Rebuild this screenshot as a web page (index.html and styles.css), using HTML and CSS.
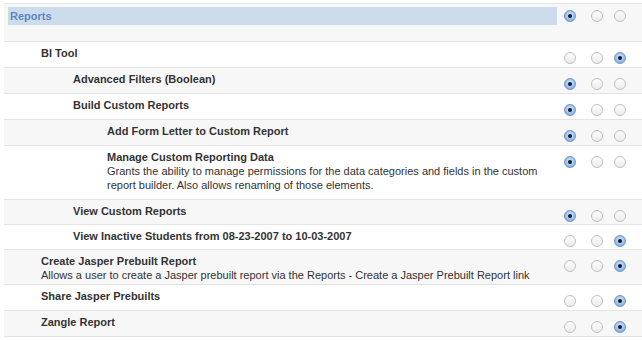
FILE: index.html
```html
<!DOCTYPE html>
<html>
<head>
<meta charset="utf-8">
<link rel="stylesheet" href="styles.css">
</head>
<body>
<div class="table">
  <div class="row row-head gray">
    <div class="label"><div class="head-bar">Reports</div></div>
    <div class="radios head-radios"><span class="radio on"></span><span class="radio"></span><span class="radio"></span></div>
  </div>
  <div class="row">
    <div class="label l1"><div class="title">BI Tool</div></div>
    <div class="radios"><span class="radio"></span><span class="radio"></span><span class="radio on"></span></div>
  </div>
  <div class="row gray">
    <div class="label l2"><div class="title">Advanced Filters (Boolean)</div></div>
    <div class="radios"><span class="radio on"></span><span class="radio"></span><span class="radio"></span></div>
  </div>
  <div class="row">
    <div class="label l2"><div class="title">Build Custom Reports</div></div>
    <div class="radios"><span class="radio on"></span><span class="radio"></span><span class="radio"></span></div>
  </div>
  <div class="row gray">
    <div class="label l3"><div class="title">Add Form Letter to Custom Report</div></div>
    <div class="radios"><span class="radio on"></span><span class="radio"></span><span class="radio"></span></div>
  </div>
  <div class="row row-tall">
    <div class="label l3"><div class="title">Manage Custom Reporting Data</div><div class="desc">Grants the ability to manage permissions for the data categories and fields in the custom report builder. Also allows renaming of those elements.</div></div>
    <div class="radios"><span class="radio on"></span><span class="radio"></span><span class="radio"></span></div>
  </div>
  <div class="row row-short gray">
    <div class="label l2"><div class="title">View Custom Reports</div></div>
    <div class="radios"><span class="radio on"></span><span class="radio"></span><span class="radio"></span></div>
  </div>
  <div class="row row-short">
    <div class="label l2"><div class="title">View Inactive Students from 08-23-2007 to 10-03-2007</div></div>
    <div class="radios"><span class="radio"></span><span class="radio"></span><span class="radio on"></span></div>
  </div>
  <div class="row gray">
    <div class="label l1"><div class="title">Create Jasper Prebuilt Report</div><div class="desc">Allows a user to create a Jasper prebuilt report via the Reports - Create a Jasper Prebuilt Report link</div></div>
    <div class="radios"><span class="radio"></span><span class="radio"></span><span class="radio on"></span></div>
  </div>
  <div class="row">
    <div class="label l1"><div class="title">Share Jasper Prebuilts</div></div>
    <div class="radios"><span class="radio"></span><span class="radio"></span><span class="radio on"></span></div>
  </div>
  <div class="row gray">
    <div class="label l1"><div class="title">Zangle Report</div></div>
    <div class="radios"><span class="radio"></span><span class="radio"></span><span class="radio on"></span></div>
  </div>
</div>
</body>
</html>
```
FILE: styles.css
```css
html, body {
  margin: 0;
  padding: 0;
  background: #ffffff;
}
body {
  font-family: "Liberation Sans", Arial, sans-serif;
  font-size: 11px;
  color: #333333;
}
.table {
  margin: 3px 0 0 4px;
  border-top: 1px solid #e6e6e6;
}
.row {
  display: flex;
  min-height: 25px;
  border-bottom: 1px solid #e4e4e4;
  background: #ffffff;
}
.row.gray {
  background: #f7f7f7;
}
.row-head {
  min-height: 37px;
}
.row-tall .label {
  padding-bottom: 7px;
}
.row-short {
  min-height: 24px;
}
.label {
  flex: 1;
  padding: 4px 0 2px 0;
  line-height: 14px;
}
.l1 { padding-left: 37px; }
.l2 { padding-left: 69px; }
.l3 { padding-left: 103px; }
.title {
  font-weight: bold;
}
.desc {
  padding-right: 20px;
}
.head-bar {
  margin: 3px 3px 0 4px;
  height: 18px;
  line-height: 18px;
  padding-left: 2px;
  background: #cddced;
  color: #5b86c1;
  font-weight: bold;
}
.label:has(.head-bar) {
  padding-top: 0;
}
.radios {
  width: 82px;
  flex: none;
  display: flex;
  align-items: flex-start;
  padding-top: 10px;
  box-sizing: border-box;
  padding-left: 4px;
}
.head-radios {
  padding-top: 6px;
}
.radio {
  width: 10px;
  height: 10px;
  border-radius: 50%;
  border: 1px solid #c0c0c0;
  background: linear-gradient(#fdfdfd, #ececec);
  position: relative;
  flex: none;
}
.radio + .radio {
  margin-left: 15px;
}
.radio + .radio + .radio {
  margin-left: 11px;
}
.radio.on {
  border-color: #7394c2;
  background: radial-gradient(circle at 50% 40%, #dcebfc 0%, #a4c8f1 45%, #649fe4 100%);
}
.radio.on::after {
  content: "";
  position: absolute;
  left: 3px;
  top: 3px;
  width: 4px;
  height: 4px;
  border-radius: 50%;
  background: #1a1a1a;
}
```
